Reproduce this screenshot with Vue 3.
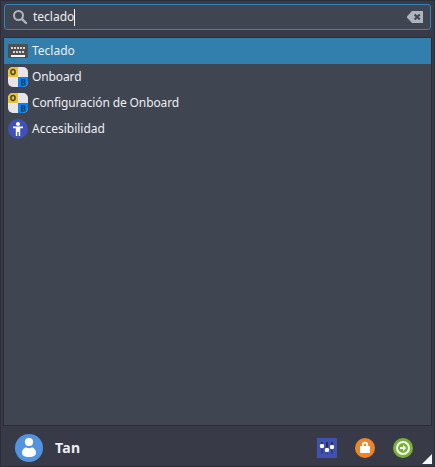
<script setup>
import { ref } from 'vue'

const query = ref('teclado')
const selected = ref(0)
const results = [
  { name: 'Teclado', icon: 'keyboard' },
  { name: 'Onboard', icon: 'onboard' },
  { name: 'Configuración de Onboard', icon: 'onboard' },
  { name: 'Accesibilidad', icon: 'access' },
]
</script>

<template>
  <div class="menu">
    <div class="search">
      <svg class="lens" width="16" height="16" viewBox="0 0 16 16">
        <circle cx="6.5" cy="6.5" r="4.5" fill="none" stroke="#afb4c1" stroke-width="2" />
        <path d="M9.8 9.8L14 14" stroke="#afb4c1" stroke-width="2.4" stroke-linecap="round" />
      </svg>
      <span class="query">{{ query }}</span><span class="caret"></span>
      <svg class="clear" width="16" height="12" viewBox="0 0 16 12">
        <path d="M5 0H16V12H5L0 6.6V5.4Z" fill="#afb4c1" />
        <path d="M7.6 3.4L12.8 8.6M12.8 3.4L7.6 8.6" stroke="#404552" stroke-width="2.1" />
      </svg>
    </div>

    <ul class="results">
      <li v-for="(item, i) in results" :key="item.name" :class="[item.icon, { active: i === selected }]" @click="selected = i">
        <svg v-if="item.icon === 'keyboard'" width="20" height="20" viewBox="0 0 20 20">
          <rect y="3" width="20" height="14" rx="1" fill="#4f4f4f" />
          <path d="M3 7h14" stroke="#d6d6d6" stroke-width="2" stroke-dasharray="2 1" />
          <path d="M5 11h11" stroke="#d6d6d6" stroke-width="2" stroke-dasharray="2 1" />
          <rect x="3" y="14" width="14" height="2" fill="#f4f4f4" />
        </svg>
        <svg v-else-if="item.icon === 'onboard'" width="20" height="20" viewBox="0 0 20 20">
          <rect width="20" height="20" rx="5" fill="#e6e6e6" />
          <path d="M5 0H10V10H0V5A5 5 0 0 1 5 0Z" fill="#e9c23c" />
          <path d="M10 10H20V15A5 5 0 0 1 15 20H10Z" fill="#0c80f2" />
          <ellipse cx="5" cy="5" rx="2.1" ry="2.4" fill="none" stroke="#51481f" stroke-width="1.5" />
          <g fill="none" stroke="#17466f" stroke-width="1.5">
            <path d="M13.7 12.7V18.1" />
            <path d="M13 12.7H15.6A1.25 1.25 0 0 1 15.6 15.3H13.6M15.6 15.3A1.4 1.4 0 0 1 15.6 18.1H13" />
          </g>
        </svg>
        <svg v-else width="20" height="20" viewBox="0 0 20 20">
          <circle cx="10" cy="10" r="10" fill="#3f51b5" />
          <circle cx="10" cy="5" r="2" fill="#fff" />
          <path d="M5 7.5H15V9.3H12.2V17H10.7V13H9.3V17H7.8V9.3H5Z" fill="#fff" />
        </svg>
        <span>{{ item.name }}</span>
      </li>
    </ul>

    <footer class="bar">
      <svg class="avatar" width="28" height="28" viewBox="0 0 28 28">
        <circle cx="14" cy="14" r="14" fill="#5294e2" />
        <circle cx="14" cy="8" r="4.1" fill="#fff" />
        <path d="M7 19C7 15.5 9.5 13.6 11.5 13.6Q14 15 16.5 13.6C18.5 13.6 21 15.5 21 19C21 21.8 18 23 14 23S7 21.8 7 19Z" fill="#fff" />
      </svg>
      <span class="user">Tan</span>
      <div class="actions">
        <svg width="20" height="20" viewBox="0 0 20 20">
          <rect width="20" height="20" fill="#3f51b5" />
          <path d="M5 4V16M10 4V16M15 4V16" stroke="#282d4c" stroke-width="2" />
          <path d="M5 8V16M10 12V16M15 9V16" stroke="#343e7c" stroke-width="2" />
          <g fill="#fff">
            <circle cx="5" cy="8" r="2.2" />
            <circle cx="10" cy="12" r="2.2" />
            <circle cx="15" cy="9" r="2.2" />
          </g>
        </svg>
        <svg width="20" height="20" viewBox="0 0 20 20">
          <circle cx="10" cy="10" r="10" fill="#ee8529" />
          <rect x="5" y="8" width="10" height="7" rx=".7" fill="#fff" />
          <path d="M7.8 8.5V6.9A2.2 2.2 0 0 1 12.2 6.9V8.5" fill="none" stroke="#fff" stroke-width="1.8" />
        </svg>
        <svg width="20" height="20" viewBox="0 0 20 20">
          <circle cx="10" cy="10" r="10" fill="#78b336" />
          <circle cx="10" cy="10" r="6" fill="none" stroke="#fff" stroke-width="2" />
          <path d="M7 9H10V7L13.2 10L10 13V11H7Z" fill="#fff" />
        </svg>
      </div>
      <svg class="grip" width="10" height="10" viewBox="0 0 10 10">
        <path d="M10 0V10H0Z" fill="#f5f6fa" />
      </svg>
    </footer>
  </div>
</template>

<style>
body {
  background: #383c4a;
}
</style>

<style scoped>
.menu {
  box-sizing: border-box;
  width: 435px;
  height: 467px;
  padding: 3px 2px 0;
  display: flex;
  flex-direction: column;
  background: #383a48;
  border: 1px solid #2b2d38;
  color: #eceef2;
  font: 12px/18px "Noto Sans", sans-serif;
}

.search {
  box-sizing: border-box;
  height: 26px;
  margin: 0 1px;
  padding: 0 7px;
  display: flex;
  align-items: center;
  background: #404552;
  border: 1px solid #3484b5;
  border-radius: 3px;
}

.lens {
  margin-right: 5px;
}

.caret {
  width: 1px;
  height: 17px;
  background: #fff;
}

.clear {
  margin-left: auto;
}

.results {
  box-sizing: border-box;
  height: 389px;
  margin: 7px 0 0;
  padding: 0;
  list-style: none;
  background: #404552;
  border: 1px solid #2b2e39;
}

.results li {
  height: 26px;
  padding-left: 4px;
  display: flex;
  align-items: center;
  gap: 4px;
}

.results li.active {
  background: #327eac;
}

.results li.onboard {
  letter-spacing: -0.12px;
}

.bar {
  flex: 1;
  display: flex;
  align-items: center;
  padding: 3px 0 0 12px;
}

.user {
  margin-left: 12px;
  font-size: 14px;
  font-weight: 700;
  letter-spacing: 0.3px;
}

.actions {
  display: flex;
  gap: 18px;
  margin-left: auto;
  margin-right: 9px;
}

.grip {
  align-self: flex-end;
  margin-bottom: 2px;
}
</style>
